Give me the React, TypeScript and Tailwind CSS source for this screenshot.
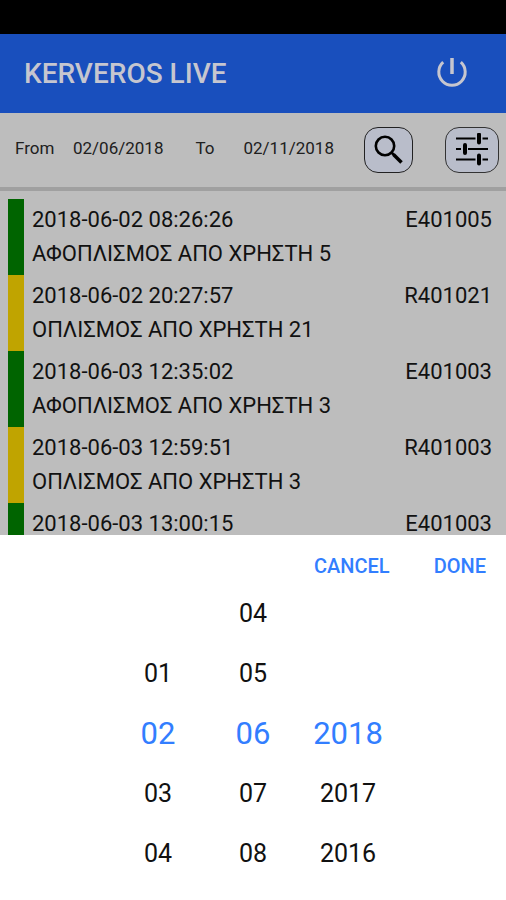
const events = [
  { time: "2018-06-02 08:26:26", code: "E401005", text: "ΑΦΟΠΛΙΣΜΟΣ ΑΠΟ ΧΡΗΣΤΗ 5", armed: false },
  { time: "2018-06-02 20:27:57", code: "R401021", text: "ΟΠΛΙΣΜΟΣ ΑΠΟ ΧΡΗΣΤΗ 21", armed: true },
  { time: "2018-06-03 12:35:02", code: "E401003", text: "ΑΦΟΠΛΙΣΜΟΣ ΑΠΟ ΧΡΗΣΤΗ 3", armed: false },
  { time: "2018-06-03 12:59:51", code: "R401003", text: "ΟΠΛΙΣΜΟΣ ΑΠΟ ΧΡΗΣΤΗ 3", armed: true },
  { time: "2018-06-03 13:00:15", code: "E401003", text: "", armed: false },
];

// Empty strings keep the selected value on the middle row
const wheels = [
  { label: "Day", selected: "02", values: ["", "01", "02", "03", "04"] },
  { label: "Month", selected: "06", values: ["04", "05", "06", "07", "08"] },
  { label: "Year", selected: "2018", values: ["", "", "2018", "2017", "2016"] },
];

function PowerIcon() {
  return (
    <svg viewBox="0 0 32 32" className="h-8 w-8" fill="none" stroke="currentColor" strokeWidth="3" aria-hidden="true">
      <path d="M16 0v16" strokeWidth="3.5" />
      <path d="M7.2 4.200a13.200 13.200 0 1 0 17.600 0" />
    </svg>
  );
}

function SearchIcon() {
  return (
    <svg viewBox="0 0 30 30" className="h-[30px] w-[30px]" fill="none" stroke="currentColor" aria-hidden="true">
      <circle cx="11" cy="11" r="9.2" strokeWidth="2.6" />
      <path d="M17.5 17.5l3 3" strokeWidth="2.5" />
      <path d="M19.500 19.500l8 8" strokeWidth="3.5" />
    </svg>
  );
}

function SlidersIcon() {
  return (
    <svg viewBox="0 0 34 34" className="h-[34px] w-[34px]" fill="none" stroke="currentColor" aria-hidden="true">
      <path d="M1 5.500h19.500M27.500 5.500h5.500M1 16h5M13 16h20M1 26.500h19.500M27.500 26.500h5.500" strokeWidth="2.2" />
      <path d="M24 1.500v8M10 12v8M24 22.500v8" strokeWidth="4" strokeLinecap="round" />
    </svg>
  );
}

function Header() {
  return (
    <header className="flex h-[79px] shrink-0 items-center justify-between bg-[#194fbd] pl-6 pr-[38px] text-[#c6c6cf]">
      <h1 className="text-[28px] font-medium leading-8">KERVEROS LIVE</h1>
      <button type="button" aria-label="Log out">
        <PowerIcon />
      </button>
    </header>
  );
}

function FilterBar() {
  return (
    <div className="flex shrink-0 items-center border-b-4 border-[#a0a0a0] py-3.5 pl-[15px] pr-[7px] text-[17px] leading-6 text-[#202020]">
      <div className="flex flex-1 items-center pb-1">
        <span className="w-[58px]" id="from">From</span>
        <button type="button" aria-labelledby="from from-date" id="from-date">02/06/2018</button>
        <span className="ml-8 w-12" id="to">To</span>
        <button type="button" aria-labelledby="to to-date" id="to-date">02/11/2018</button>
      </div>
      <div className="flex gap-8 text-black">
        <button
          type="button"
          aria-label="Search"
          className="flex h-[46px] w-[49px] items-center justify-center rounded-[14px] border border-[#222] bg-[#b9bdca]"
        >
          <SearchIcon />
        </button>
        <button
          type="button"
          aria-label="Filters"
          className="flex h-[46px] w-[54px] items-center justify-center rounded-[14px] border border-[#333] bg-[#b9bdca]"
        >
          <SlidersIcon />
        </button>
      </div>
    </div>
  );
}

function EventLog() {
  return (
    <ul className="min-h-0 flex-1 overflow-hidden pl-2 pr-3.5 pt-2 text-[22px] leading-[34px] text-[#111]">
      {events.map((event) => (
        <li key={event.time} className="flex min-h-19 gap-2">
          <span className={event.armed ? "w-4 bg-[#c0a400]" : "w-4 bg-[#006400]"} />
          <div className="flex-1 py-1">
            <div className="flex justify-between">
              <time>{event.time}</time>
              <span>{event.code}</span>
            </div>
            {event.text && <p>{event.text}</p>}
          </div>
        </li>
      ))}
    </ul>
  );
}

function DatePicker() {
  return (
    <section aria-label="Choose date" className="shrink-0 bg-white pb-4 pt-[13px]">
      <div className="flex h-9 items-center justify-end gap-11 pr-5 text-xl font-medium text-[#327eff]">
        <button type="button">CANCEL</button>
        <button type="button">DONE</button>
      </div>
      <div className="flex justify-center">
        {wheels.map((wheel) => (
          <ul key={wheel.label} aria-label={wheel.label} className="w-[95px]">
            {wheel.values.map((value, i) => (
              <li key={i} className="flex h-15 items-center justify-center">
                {value && (
                  <button
                    type="button"
                    aria-pressed={value === wheel.selected}
                    className={value === wheel.selected ? "text-[31px] text-[#327eff]" : "text-[25px] text-[#111]"}
                  >
                    {value}
                  </button>
                )}
              </li>
            ))}
          </ul>
        ))}
      </div>
    </section>
  );
}

export default function App() {
  return (
    <div className="flex h-screen flex-col bg-[#bdbdbd] font-['Roboto',sans-serif]">
      <div className="h-[34px] shrink-0 bg-black" />
      <Header />
      <FilterBar />
      <EventLog />
      <DatePicker />
    </div>
  );
}
